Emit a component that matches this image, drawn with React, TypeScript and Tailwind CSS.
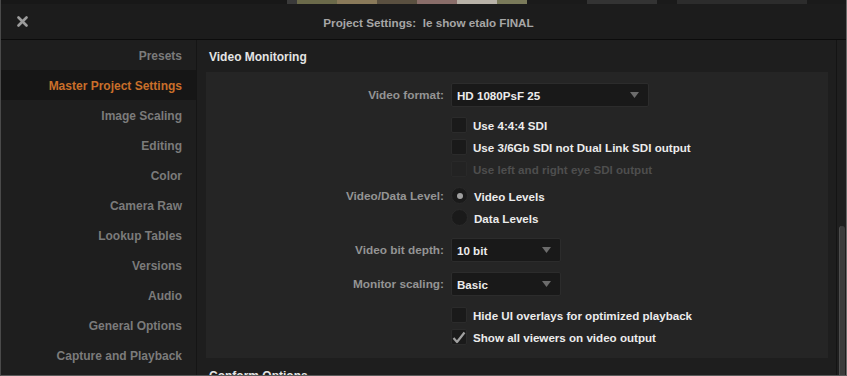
import React from "react";

const font = { fontFamily: '"Liberation Sans", Arial, sans-serif' };

function Arrow() {
  return (
    <svg width="9" height="6" viewBox="0 0 9 6" className="shrink-0">
      <path d="M0 0 L9 0 L4.5 6 Z" fill="#6c6c6c" />
    </svg>
  );
}

function Select({ value, width }: { value: string; width: string }) {
  return (
    <div
      className={`${width} h-[24px] flex items-center justify-between pl-[5px] pr-[9px] bg-[#191919] border border-[#2c2c2c] rounded-[2px] text-[#ececec] font-bold text-[11.6px]`}
    >
      <span className="pt-[2px]">{value}</span>
      <Arrow />
    </div>
  );
}

function Check({
  label,
  checked,
  disabled,
}: {
  label: string;
  checked?: boolean;
  disabled?: boolean;
}) {
  return (
    <div className="flex items-center h-[16px] pl-[245px]">
      <div
        className={`w-[16px] h-[16px] shrink-0 rounded-[2px] flex items-center justify-center ${
          disabled ? "bg-[#232323] border border-[#292929]" : "bg-[#1a1a1a] border border-[#2b2b2b]"
        }`}
      >
        {checked && (
          <svg width="14" height="13" viewBox="0 0 14 13">
            <path d="M1.5 7 L5 11 L12.5 1.5" stroke="#a0a0a0" strokeWidth="2.2" fill="none" strokeLinejoin="round" />
          </svg>
        )}
      </div>
      <span
        className={`ml-[6px] pt-[2px] font-bold text-[11.6px] whitespace-nowrap ${
          disabled ? "text-[#4e4e4e]" : "text-[#ececec]"
        }`}
      >
        {label}
      </span>
    </div>
  );
}

function Radio({ label, checked }: { label: string; checked?: boolean }) {
  return (
    <div className="flex items-center">
      <div className="w-[17px] h-[17px] shrink-0 rounded-full bg-[#1a1a1a] border border-[#2a2a2a] flex items-center justify-center">
        {checked && <div className="w-[6px] h-[6px] rounded-full bg-[#a0a0a0]" />}
      </div>
      <span className="ml-[6px] pt-[2px] font-bold text-[11.6px] text-[#ececec]">{label}</span>
    </div>
  );
}

function Label({ children }: { children: React.ReactNode }) {
  return (
    <div className="w-[238px] pt-[2px] text-right font-bold text-[11.8px] text-[#949494] shrink-0">
      {children}
    </div>
  );
}

const items = [
  "Presets",
  "Master Project Settings",
  "Image Scaling",
  "Editing",
  "Color",
  "Camera Raw",
  "Lookup Tables",
  "Versions",
  "Audio",
  "General Options",
  "Capture and Playback",
];

export default function App() {
  return (
    <div
      className="w-[847px] h-[376px] overflow-hidden flex flex-col bg-[#1d1d1d] border-l border-r border-b border-l-[#4a4a4a] border-r-[#6a6a6a] border-b-[#5a5a5a]"
      style={font}
    >
      {/* top strip of underlying window */}
      <div className="h-[4px] flex shrink-0 bg-[#151515]">
        <div className="w-[286px] bg-[#181818]" />
        <div className="w-[10px] bg-[#3a3a3a]" />
        <div className="w-[40px] bg-[#6b6a4a]" />
        <div className="w-[40px] bg-[#8a7a5a]" />
        <div className="w-[40px] bg-[#5a5040]" />
        <div className="w-[40px] bg-[#8a6e6a]" />
        <div className="w-[40px] bg-[#b8b2a8]" />
        <div className="w-[30px] bg-[#7a7a5a]" />
        <div className="w-[60px] bg-[#1a1a1a]" />
        <div className="w-[70px] bg-[#333333]" />
        <div className="w-[20px] bg-[#1a1a1a]" />
        <div className="w-[130px] bg-[#2c2c2c]" />
        <div className="flex-1 bg-[#1a1a1a]" />
      </div>

      {/* title bar */}
      <div className="h-[36px] shrink-0 relative flex items-center justify-center pl-[10px] bg-[#1c1c1c] border-b border-b-[#0c0c0c]">
        <svg
          width="11"
          height="11"
          viewBox="0 0 11 11"
          className="absolute left-[16px] top-[12px]"
        >
          <path d="M1.5 1.5 L9.5 9.5 M9.5 1.5 L1.5 9.5" stroke="#9c9c9c" strokeWidth="2.6" strokeLinecap="round" />
        </svg>
        <span className="pt-[2px] font-bold text-[11.7px] text-[#a6a6a6] whitespace-pre">
          Project Settings:  le show etalo FINAL
        </span>
      </div>

      <div className="flex flex-1 min-h-0">
        {/* sidebar */}
        <div className="w-[196px] shrink-0 bg-[#1e1e1e] border-r border-r-[#151515] flex flex-col">
          {items.map((it) => {
            const active = it === "Master Project Settings";
            return (
              <div
                key={it}
                className={`h-[30px] shrink-0 flex items-center justify-end pr-[14px] pt-[2px] font-bold text-[12px] ${
                  active ? "bg-[#161616] text-[#c96f2a]" : "text-[#7b7b7b]"
                }`}
              >
                {it}
              </div>
            );
          })}
        </div>

        {/* main */}
        <div className="flex-1 min-w-0 flex flex-col bg-[#1e1e1e]">
          <div className="h-[32px] shrink-0 flex items-center pl-[12px] pt-[2px] font-bold text-[12px] text-[#e4e4e4]">
            Video Monitoring
          </div>
          <div className="ml-[9px] mr-[8px] h-[286px] shrink-0 bg-[#252525] pt-[11px] flex flex-col">
            <div className="flex items-center h-[24px]">
              <Label>Video format:</Label>
              <div className="ml-[7px]">
                <Select value="HD 1080PsF 25" width="w-[198px]" />
              </div>
            </div>
            <div className="mt-[10px] flex flex-col gap-[6px]">
              <Check label="Use 4:4:4 SDI" />
              <Check label="Use 3/6Gb SDI not Dual Link SDI output" />
              <Check label="Use left and right eye SDI output" disabled />
            </div>
            <div className="mt-[10px] flex items-center h-[17px]">
              <Label>Video/Data Level:</Label>
              <div className="ml-[7px]">
                <Radio label="Video Levels" checked />
              </div>
            </div>
            <div className="mt-[5px] flex items-center h-[17px] pl-[245px]">
              <Radio label="Data Levels" />
            </div>
            <div className="mt-[12px] flex items-center h-[24px]">
              <Label>Video bit depth:</Label>
              <div className="ml-[7px]">
                <Select value="10 bit" width="w-[110px]" />
              </div>
            </div>
            <div className="mt-[10px] flex items-center h-[24px]">
              <Label>Monitor scaling:</Label>
              <div className="ml-[7px]">
                <Select value="Basic" width="w-[110px]" />
              </div>
            </div>
            <div className="mt-[11px] flex flex-col gap-[6px]">
              <Check label="Hide UI overlays for optimized playback" />
              <Check label="Show all viewers on video output" checked />
            </div>
          </div>
          <div className="h-[32px] shrink-0 flex items-center pl-[12px] mt-[2px] font-bold text-[12px] text-[#e4e4e4]">
            Conform Options
          </div>
        </div>

        {/* scrollbar */}
        <div className="w-[10px] shrink-0 bg-[#1f1f1f] border-l border-l-[#141414] flex flex-col pl-[2px] pr-[1px]">
          <div className="h-[186px] shrink-0" />
          <div className="flex-1 bg-[#3c3c3c] border-l border-l-[#4e4e4e] rounded-t-[3px]" />
        </div>
      </div>
    </div>
  );
}
